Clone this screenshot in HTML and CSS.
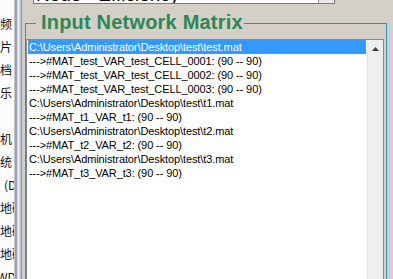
FILE: index.html
```html
<!DOCTYPE html>
<html lang="zh-CN">
  <head>
    <meta charset="UTF-8" />
    <meta name="viewport" content="width=device-width, initial-scale=1.0" />
    <title>Input Network Matrix</title>
    <link rel="stylesheet" href="styles.css">
  </head>
  <body>
    <div class="window">
      <div class="tree">
        <div class="tree-row">频</div>
        <div class="tree-row">片</div>
        <div class="tree-row">档</div>
        <div class="tree-row">乐</div>
        <div class="tree-row"></div>
        <div class="tree-row">机</div>
        <div class="tree-row">统</div>
        <div class="tree-row indent">(D:)</div>
        <div class="tree-row">地磁</div>
        <div class="tree-row">地磁</div>
        <div class="tree-row">地磁</div>
        <div class="tree-row outdent">WD</div>
      </div>

      <div class="splitter"></div>

      <div class="content">
        <div class="combo">
          <span class="combo-text">Node - Efficiency</span>
          <span class="combo-button"></span>
        </div>

        <fieldset class="group">
          <legend>Input Network Matrix</legend>
          <div class="listbox">
            <ul class="items">
              <li class="item selected">C:\Users\Administrator\Desktop\test\test.mat</li>
              <li class="item">---&gt;#MAT_test_VAR_test_CELL_0001: (90 -- 90)</li>
              <li class="item">---&gt;#MAT_test_VAR_test_CELL_0002: (90 -- 90)</li>
              <li class="item">---&gt;#MAT_test_VAR_test_CELL_0003: (90 -- 90)</li>
              <li class="item">C:\Users\Administrator\Desktop\test\t1.mat</li>
              <li class="item">---&gt;#MAT_t1_VAR_t1: (90 -- 90)</li>
              <li class="item">C:\Users\Administrator\Desktop\test\t2.mat</li>
              <li class="item">---&gt;#MAT_t2_VAR_t2: (90 -- 90)</li>
              <li class="item">C:\Users\Administrator\Desktop\test\t3.mat</li>
              <li class="item">---&gt;#MAT_t3_VAR_t3: (90 -- 90)</li>
            </ul>
            <div class="scrollbar">
              <div class="scroll-up">
                <svg width="7" height="4" viewBox="0 0 7 4">
                  <polygon points="3.5,0 7,4 0,4" fill="#3c3c3c" />
                </svg>
              </div>
            </div>
          </div>
        </fieldset>
      </div>
    </div>
  </body>
</html>
```

FILE: styles.css
```css
body {
  margin: 0;
  padding: 0;
  height: 279px;
  overflow: hidden;
  background-color: #d4d0c8;
  font-family: "Liberation Sans", Arial, sans-serif;
  color: #000;
}

.window {
  display: flex;
  height: 279px;
}

/* left tree, only its clipped edge is visible */
.tree {
  flex: none;
  width: 14px;
  padding-top: 12px;
  overflow: hidden;
  background-color: #fbfbfb;
  font-family: "Noto Sans CJK SC", sans-serif;
  font-size: 12px;
  line-height: 23px;
  white-space: nowrap;
  color: #111;
}

.tree-row {
  height: 23px;
}

.tree-row.indent {
  text-indent: 4px;
}

.tree-row.outdent {
  text-indent: -3px;
}

.splitter {
  flex: none;
  width: 7px;
  border-right: 1px solid #6e9bd0;
  background: linear-gradient(
    to right,
    #d8d8d8 0,
    #8e8e8e 2px,
    #b4bcc8 3px,
    #eef3fa 4px,
    #e2eaf5 5px,
    #a9b9ce 7px
  );
}

.content {
  flex: 1;
  min-width: 0;
  padding: 0 6px 0 3px;
}

.combo {
  display: flex;
  box-sizing: border-box;
  width: 302px;
  height: 24px;
  margin: -20px 0 0 8px;
  border: 1px solid #7a7a7a;
  background-color: #fff;
}

.combo-text {
  flex: 1;
  padding: 3px 0 0 2px;
  font-size: 19px;
  line-height: 22px;
  white-space: nowrap;
  overflow: hidden;
}

.combo-button {
  width: 15px;
  border-left: 1px solid #9a9a9a;
  background-color: #e8e8e8;
}

.group {
  min-width: 0;
  margin: 8px 0 0;
  padding: 0;
  border: 1px solid #2b8fd6;
}

.group legend {
  margin-left: 10px;
  padding: 0 1px 2px 5px;
  font-size: 20px;
  line-height: 20px;
  font-weight: bold;
  letter-spacing: 0.2px;
  color: #2e8656;
}

.listbox {
  display: flex;
  height: 240px;
  margin: 5px 2px 0 0;
  border: 1px solid #828790;
  background-color: #fff;
}

.items {
  flex: 1;
  margin: 0;
  padding: 0;
  list-style: none;
  font-size: 11px;
  letter-spacing: -0.1px;
}

.item {
  box-sizing: border-box;
  height: 14px;
  margin: 0 1px;
  padding: 1px 0 0 1px;
  line-height: 13px;
  white-space: nowrap;
}

.item.selected {
  background-color: #3399ff;
  color: #fff;
  outline: 1px dotted #d9782a;
  outline-offset: -1px;
}

.scrollbar {
  flex: none;
  width: 15px;
  border-left: 1px solid #e4e4e4;
  background-color: #efefef;
}

.scroll-up {
  display: flex;
  align-items: center;
  justify-content: center;
  height: 17px;
}
```
